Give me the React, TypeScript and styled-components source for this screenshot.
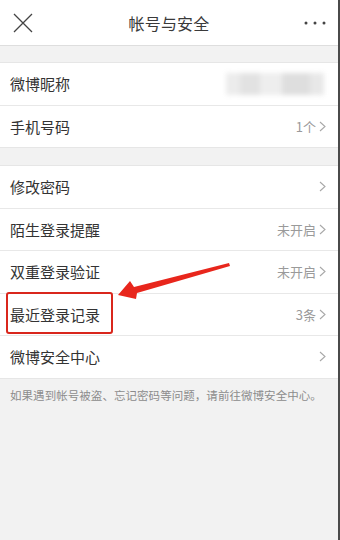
import React from "react";
import styled, { createGlobalStyle } from "styled-components";

const GlobalStyle = createGlobalStyle`
  html, body {
    margin: 0;
    padding: 0;
    background: #f2f2f2;
  }
  body {
    font-family: "Noto Sans CJK SC", "Noto Sans", "Liberation Sans", sans-serif;
  }
`;

const Page = styled.div`
  position: relative;
  width: 340px;
  min-height: 540px;
  box-sizing: border-box;
  background: #f2f2f2;
  border-right: 2px solid #4a4a4a;
  overflow: hidden;
`;

const Header = styled.header`
  height: 46px;
  display: flex;
  align-items: center;
  justify-content: space-between;
  padding: 0 12px 0 12px;
  background: #fff;
  border-bottom: 1px solid #dedede;
  box-sizing: border-box;
`;

const IconButton = styled.div`
  width: 22px;
  height: 22px;
  display: flex;
  align-items: center;
  justify-content: center;
`;

const Title = styled.h1`
  margin: 0;
  font-size: 16px;
  font-weight: 400;
  color: #3a3a3a;
  letter-spacing: 0.2px;
`;

const Group = styled.section<{ gap: number }>`
  margin-top: ${(p) => p.gap}px;
  background: #fff;
  border-top: 1px solid #e6e6e6;
  border-bottom: 1px solid #e6e6e6;
`;

const Row = styled.div`
  height: 41.5px;
  display: flex;
  align-items: center;
  padding: 0 12px 0 10px;
  & + & {
    border-top: 1px solid #e8e8e8;
  }
`;

const Label = styled.span<{ marked?: boolean }>`
  position: relative;
  flex: 1;
  font-size: 15px;
  color: #333;
  &::after {
    content: "";
    display: ${(p) => (p.marked ? "block" : "none")};
    position: absolute;
    left: -4px;
    top: -12px;
    width: 103px;
    height: 38px;
    border: 2.5px solid #d9261c;
    border-radius: 3px;
  }
`;

const Value = styled.span`
  font-size: 13px;
  color: #9a9a9a;
  margin-right: 3px;
`;

const Chevron = styled.svg`
  width: 7px;
  height: 11px;
  flex-shrink: 0;
`;

const Blur = styled.div`
  display: flex;
  margin-right: 2px;
  filter: blur(2.5px);
`;

const BlurBlock = styled.div<{ w: number; tone: string }>`
  width: ${(p) => p.w}px;
  height: 22px;
  background: ${(p) => p.tone};
`;

const Note = styled.p`
  margin: 0;
  padding: 8px 10px 0;
  font-size: 11.5px;
  color: #8c8c8c;
  letter-spacing: 0.05px;
  white-space: nowrap;
`;

const Arrow = styled.svg`
  position: absolute;
  left: 115px;
  top: 260px;
  width: 120px;
  height: 45px;
  pointer-events: none;
`;

const Arrowhead = () => (
  <Chevron viewBox="0 0 7 11">
    <path d="M1 1 L6 5.5 L1 10" fill="none" stroke="#a8a8a8" strokeWidth="1.1" />
  </Chevron>
);

type Item = { label: string; value?: string; chevron?: boolean; marked?: boolean; blur?: boolean };

const groupA: Item[] = [
  { label: "微博昵称", blur: true },
  { label: "手机号码", value: "1个", chevron: true },
];

const groupB: Item[] = [
  { label: "修改密码", chevron: true },
  { label: "陌生登录提醒", value: "未开启", chevron: true },
  { label: "双重登录验证", value: "未开启", chevron: true },
  { label: "最近登录记录", value: "3条", chevron: true, marked: true },
  { label: "微博安全中心", chevron: true },
];

const blurTones: [number, string][] = [
  [14, "#ececec"],
  [20, "#e2e2e2"],
  [22, "#eeeeee"],
  [28, "#dedede"],
  [14, "#e8e8e8"],
];

const renderRow = (item: Item) => (
  <Row key={item.label}>
    <Label marked={item.marked}>{item.label}</Label>
    {item.blur && (
      <Blur>
        {blurTones.map(([w, tone], i) => (
          <BlurBlock key={i} w={w} tone={tone} />
        ))}
      </Blur>
    )}
    {item.value && <Value>{item.value}</Value>}
    {item.chevron && <Arrowhead />}
  </Row>
);

export default function App() {
  return (
    <Page>
      <GlobalStyle />
      <Header>
        <IconButton>
          <svg width="20" height="20" viewBox="0 0 20 20">
            <path d="M1 1 L19 19 M19 1 L1 19" stroke="#444" strokeWidth="1.3" />
          </svg>
        </IconButton>
        <Title>帐号与安全</Title>
        <IconButton>
          <svg width="22" height="6" viewBox="0 0 22 6">
            <circle cx="2" cy="3" r="1.5" fill="#444" />
            <circle cx="11" cy="3" r="1.5" fill="#444" />
            <circle cx="20" cy="3" r="1.5" fill="#444" />
          </svg>
        </IconButton>
      </Header>
      <Group gap={16}>{groupA.map(renderRow)}</Group>
      <Group gap={17}>{groupB.map(renderRow)}</Group>
      <Note>如果遇到帐号被盗、忘记密码等问题，请前往微博安全中心。</Note>
      <Arrow viewBox="0 0 120 45">
        <polygon
          points="3,35 15,21 19,27 114,3 115,6 22,33 21,39"
          fill="#e8261c"
        />
      </Arrow>
    </Page>
  );
}
